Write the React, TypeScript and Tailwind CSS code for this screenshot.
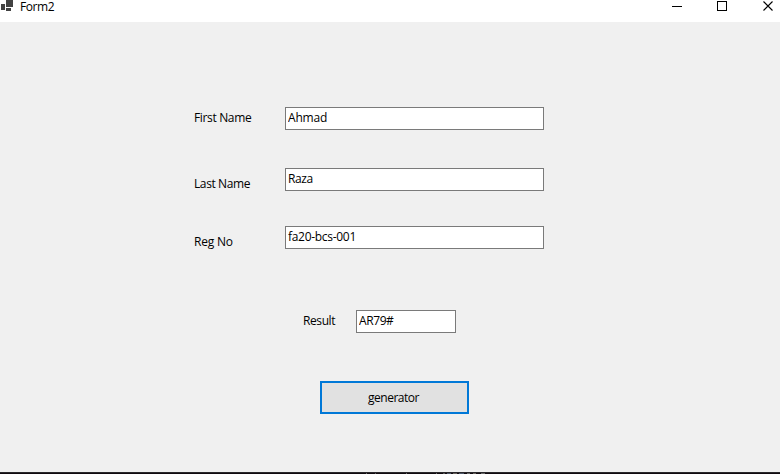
import type { ReactNode } from "react";

type RowProps = {
  label: ReactNode;
  value: string;
  row: string;
  labelBox: string;
  inputBox: string;
};

function Row({ label, value, row, labelBox, inputBox }: RowProps) {
  return (
    <div className={`flex items-start ${row}`}>
      <label className={`shrink-0 whitespace-nowrap leading-4 ${labelBox}`}>{label}</label>
      <input
        defaultValue={value}
        className={`h-[23px] shrink-0 border border-[#7a7a7a] bg-white pb-[2px] pl-[2px] leading-4 outline-none ${inputBox}`}
      />
    </div>
  );
}

function TitleBar() {
  return (
    <header className="flex h-[22px] items-start bg-white">
      <svg width="14" height="12" viewBox="0 0 14 12" shapeRendering="crispEdges" className="shrink-0" fill="#424242">
        <path d="M6 0h7v7H6z M1 4h4v6H1z M6 8h5v3H6z" />
      </svg>
      <span className="ml-[6px] leading-[14px] tracking-[-0.4px]">Form2</span>
      <div className="ml-auto flex" role="group">
        <svg width="108" height="14" viewBox="0 0 108 14" fill="none" stroke="#000">
          <path d="M0 6.5h10M45.5 1.5h9v9h-9z" shapeRendering="crispEdges" />
          <path d="M91.5 1.5l9 9M100.5 1.5l-9 9" strokeWidth="1.1" />
        </svg>
      </div>
    </header>
  );
}

export default function App() {
  return (
    <div className="flex h-[474px] w-[780px] flex-col overflow-hidden bg-[#f0f0f0] font-['Open_Sans','Noto_Sans',sans-serif] text-[12px] text-black">
      <TitleBar />
      <main className="flex-1 pt-[85px]">
        <Row label="First Name" value="Ahmad" row="h-[61px] pl-[194px]" labelBox="w-[91px] pt-[3px] tracking-[-0.35px]" inputBox="w-[259px] tracking-[-0.2px]" />
        <Row label="Last Name" value="Raza" row="h-[58px] pl-[194px]" labelBox="w-[91px] pt-[8px] tracking-[-0.4px]" inputBox="w-[259px] tracking-[-0.4px]" />
        <Row label="Reg No" value="fa20-bcs-001" row="h-[84px] pl-[194px]" labelBox="w-[91px] pt-[8px] tracking-[-0.2px]" inputBox="w-[259px] tracking-[-0.3px]" />
        <Row label="Result" value="AR79#" row="h-[71px] pl-[303px]" labelBox="w-[53px] pt-[3px] tracking-[-0.4px]" inputBox="w-[100px] tracking-[-0.4px]" />
        <button className="ml-[320px] flex h-[33px] w-[149px] items-center justify-center border-2 border-[#0078d7] bg-[#e1e1e1] pr-[2px] leading-4 tracking-[-0.5px]">
          generator
        </button>
      </main>
      <footer className="flex h-[2px] border-t border-[#29272a] bg-[#110b10]">
        <i className="ml-[366px] w-px bg-[#666]" />
        <i className="ml-[8px] w-px bg-[#555]" />
        <i className="ml-[30px] w-px bg-[#666]" />
        <i className="ml-[29px] w-px bg-[#666]" />
        <i className="ml-[6px] w-[2px] bg-[#555]" />
        <i className="ml-[2px] w-[4px] bg-[#4c5566]" />
        <i className="ml-[2px] w-[4px] bg-[#66615c]" />
        <i className="ml-[2px] w-[5px] bg-[#4c5566]" />
        <i className="ml-[3px] w-[3px] bg-[#666]" />
        <i className="ml-[3px] w-[3px] bg-[#66615c]" />
        <i className="ml-[5px] w-[4px] bg-[#666]" />
      </footer>
    </div>
  );
}
